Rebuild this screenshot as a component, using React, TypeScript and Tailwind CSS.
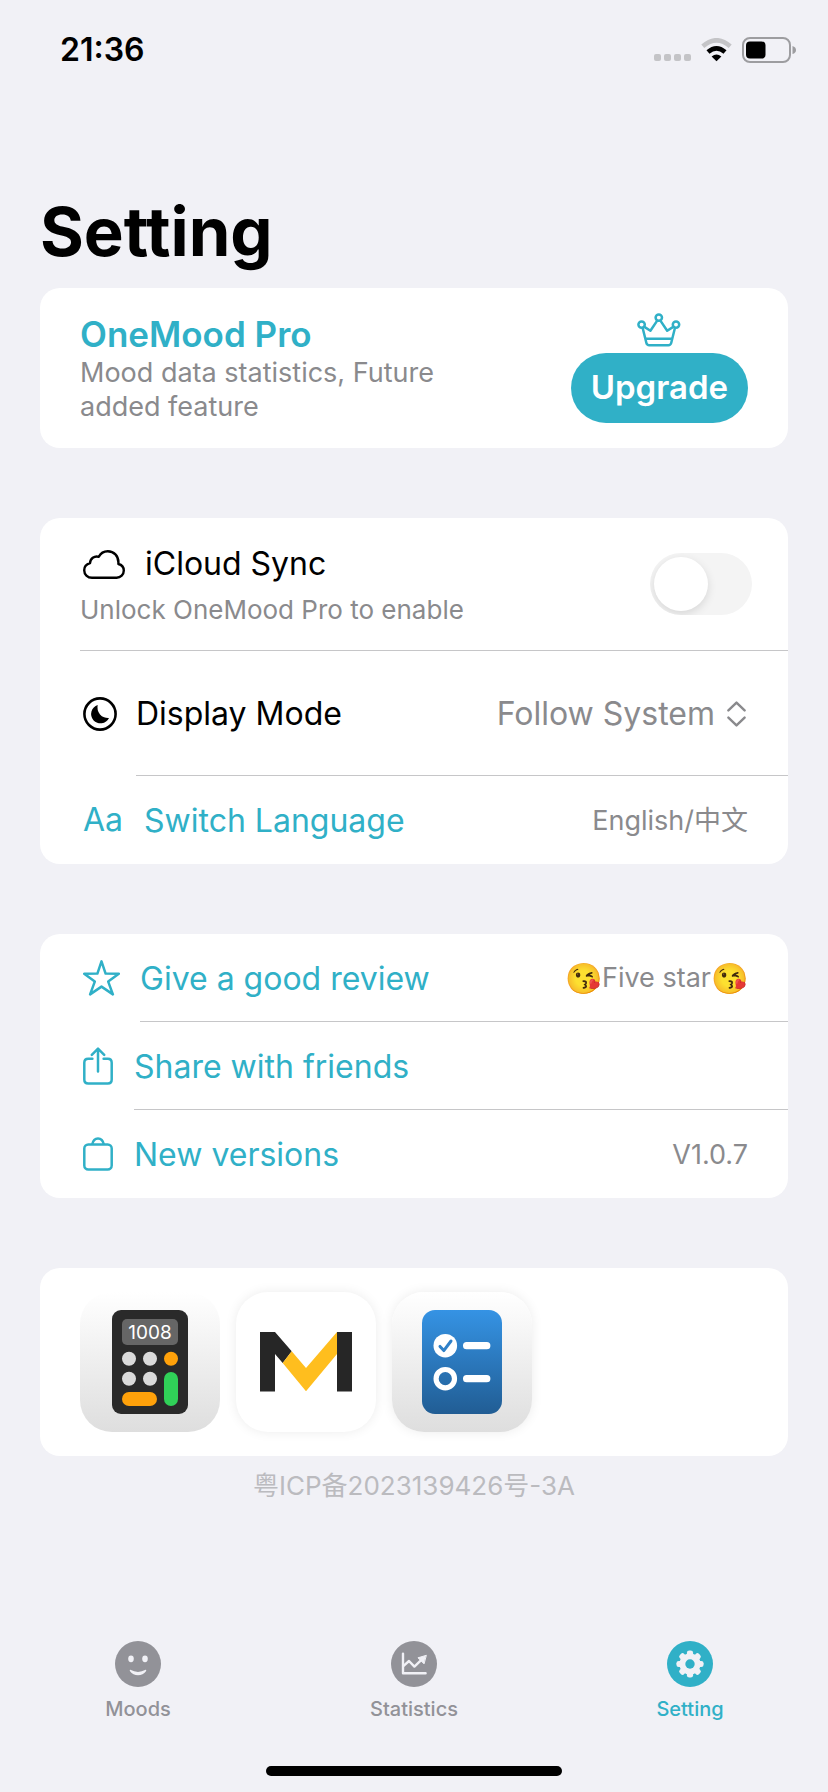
import { useState, type ReactNode } from 'react'
import clsx from 'clsx'

function StatusIcons() {
  return (
    <div className="flex items-center gap-2.5">
      <svg width="37" height="24" viewBox="0 0 37 24" fill="#c4c4c7">
        {[0, 10, 20, 30].map((x) => (
          <rect key={x} x={x} y="16" width="7" height="7" rx="2" />
        ))}
      </svg>
      <svg width="31" height="24" viewBox="0 0 31 24" fill="none" strokeWidth="4.6">
        <path d="M1.8 8.2Q15.5 -3.6 29.2 8.2" stroke="#c4c4c7" />
        <path d="M7 14Q15.5 6.6 24 14" stroke="#000" />
        <path d="M15.5 23.2L10.6 18.4Q15.5 14.4 20.4 18.4Z" fill="#000" />
      </svg>
      <svg width="54" height="26" viewBox="0 0 54 26">
        <rect x="1" y="1" width="47" height="24" rx="7" fill="none" stroke="#9d9da0" strokeWidth="2" />
        <rect x="4" y="4.5" width="19.5" height="17" rx="4" fill="#000" />
        <path d="M50.5 9Q54 10 54 13Q54 16 50.5 17Z" fill="#9d9da0" />
      </svg>
    </div>
  )
}

function CrownIcon() {
  return (
    <svg width="44" height="34" viewBox="0 0 44 34" fill="none" stroke="currentColor" strokeWidth="2.5" strokeLinejoin="round">
      <circle cx="4.6" cy="11.6" r="3.2" />
      <circle cx="21.8" cy="4.6" r="3.2" />
      <circle cx="39" cy="11.6" r="3.2" />
      <path d="M5.6 14.8L9.4 30Q10 32.2 12.2 32.2H31.4Q33.6 32.2 34.2 30L38 14.8" />
      <path d="M7 13.6L13.4 17.8L20.2 7.6M36.6 13.6L30.2 17.8L23.4 7.6" />
      <path d="M8.4 25.8H35.2" />
    </svg>
  )
}

function CloudIcon() {
  return (
    <svg width="42" height="29" viewBox="0 0 42 29" fill="none" stroke="currentColor" strokeWidth="2.4" strokeLinejoin="round">
      <path d="M9 27.8C4.5 27.8 1.2 24.4 1.2 20.3C1.2 17 3.4 14.2 7 13.2C7.2 8.6 11.3 5.6 15.8 6.8C17.6 3.3 21 1.2 24.8 1.2C31 1.2 35.4 6 35.4 12.2V14C38.6 14.8 40.8 17.3 40.8 20.6C40.8 24.6 37.6 27.8 33.6 27.8Z" />
    </svg>
  )
}

function MoonIcon() {
  return (
    <svg width="34" height="34" viewBox="0 0 34 34">
      <circle cx="17" cy="17" r="15.6" fill="none" stroke="currentColor" strokeWidth="2.6" />
      <path d="M14.7 8A9.4 9.4 0 1 0 26 21A10.6 10.6 0 0 1 14.7 8Z" fill="currentColor" />
    </svg>
  )
}

function StarIcon() {
  return (
    <svg width="37" height="36" viewBox="0 0 37 36" fill="none" stroke="currentColor" strokeWidth="2.5" strokeLinejoin="round">
      <path d="M18.5 1.4L22.6 13.6L35.8 13.8L25.2 21.6L29.9 34.4L18.5 26.6L7.1 34.4L11.8 21.6L1.2 13.8L14.4 13.6Z" />
    </svg>
  )
}

function ShareIcon() {
  return (
    <svg width="30" height="38" viewBox="0 0 30 38" fill="none" stroke="currentColor" strokeWidth="2.5" strokeLinecap="round" strokeLinejoin="round">
      <path d="M9.4 11.8H5.2Q1.3 11.8 1.3 15.8V32.6Q1.3 36.6 5.2 36.6H24.8Q28.7 36.6 28.7 32.6V15.8Q28.7 11.8 24.8 11.8H20.6" />
      <path d="M15 1.8V24.4M8.8 7.8L15 1.6L21.2 7.8" />
    </svg>
  )
}

function BagIcon() {
  return (
    <svg width="30" height="34" viewBox="0 0 30 34" fill="none" stroke="currentColor" strokeWidth="2.5">
      <rect x="1.3" y="7.4" width="27.4" height="25.2" rx="4" />
      <path d="M9.2 7.4Q10.4 1.4 15 1.4Q19.6 1.4 20.8 7.4" />
    </svg>
  )
}

function CalculatorApp() {
  return (
    <svg className="size-full" viewBox="0 0 140 140">
      <rect x="32" y="18" width="76" height="104" rx="9" fill="#2a2a2a" />
      <rect x="42" y="27" width="56" height="26" rx="5" fill="#666" />
      <text x="70" y="47" textAnchor="middle" fontSize="19" fill="#fff">
        1008
      </text>
      <g fill="#dadada">
        <circle cx="49" cy="66.7" r="7" />
        <circle cx="70" cy="66.7" r="7" />
        <circle cx="49" cy="86.7" r="7" />
        <circle cx="70" cy="86.7" r="7" />
      </g>
      <circle cx="91" cy="66.7" r="7" fill="#ffa10a" />
      <rect x="42" y="100" width="35" height="14" rx="7" fill="#ffa10a" />
      <rect x="84" y="80" width="14" height="34" rx="7" fill="#30d158" />
    </svg>
  )
}

function MailApp() {
  return (
    <svg className="size-full" viewBox="0 0 140 140">
      <path d="M24 40H39L55.7 59.3L46.7 71L39 62V99.6H24ZM101 40H116V99.6H101Z" fill="#262626" />
      <path d="M55.7 59.3L70 76L101 40V62L70 99.2L46.7 71Z" fill="#ffbe1e" />
    </svg>
  )
}

function TodoApp() {
  return (
    <svg className="size-full" viewBox="0 0 140 140">
      <defs>
        <linearGradient id="todo" x1="0" y1="0" x2="0" y2="1">
          <stop offset="0" stopColor="#3593e4" />
          <stop offset="1" stopColor="#215d94" />
        </linearGradient>
      </defs>
      <rect x="30" y="18" width="80" height="104" rx="13" fill="url(#todo)" />
      <circle cx="53.3" cy="53.7" r="11.8" fill="#fff" />
      <path d="M48 54.4L51.8 58.6L59 49" fill="none" stroke="#2f80c8" strokeWidth="3" strokeLinecap="round" strokeLinejoin="round" />
      <circle cx="53.3" cy="86.7" r="9.2" fill="none" stroke="#fff" strokeWidth="5.2" />
      <path d="M74.6 53.7H94.8M74.6 86.7H94.8" stroke="#fff" strokeWidth="7.2" strokeLinecap="round" />
    </svg>
  )
}

function MoodsIcon() {
  return (
    <svg width="46" height="46" viewBox="0 0 46 46">
      <circle cx="23" cy="23" r="23" fill="currentColor" />
      <ellipse cx="16" cy="17.8" rx="2.8" ry="3.4" fill="#f1f1f6" />
      <ellipse cx="30" cy="17.8" rx="2.8" ry="3.4" fill="#f1f1f6" />
      <path d="M15.4 28.8Q23 33 30.6 28.8Q31.8 28.8 31 30.2Q28 34.2 23 34.2Q18 34.2 15 30.2Q14.2 28.8 15.4 28.8Z" fill="#f1f1f6" />
    </svg>
  )
}

function StatisticsIcon() {
  return (
    <svg width="46" height="46" viewBox="0 0 46 46" fill="none" stroke="#f1f1f6" strokeWidth="2.4" strokeLinecap="round" strokeLinejoin="round">
      <circle cx="23" cy="23" r="23" fill="currentColor" stroke="none" />
      <path d="M12 12.6V32.3H34.6" />
      <path d="M12.6 24.8L18 20L23.4 25.6L30.4 18.8" />
      <path d="M35 14.4L27 16.8L32.8 22.6Z" fill="#f1f1f6" strokeWidth="1" />
    </svg>
  )
}

function GearIcon() {
  return (
    <svg width="46" height="46" viewBox="0 0 46 46">
      <circle cx="23" cy="23" r="23" fill="currentColor" />
      <g fill="#f1f1f6">
        <circle cx="23" cy="23" r="10.6" />
        {[0, 45, 90, 135].map((deg) => (
          <rect key={deg} x="19.9" y="9.4" width="6.2" height="27.2" rx="2.4" transform={`rotate(${deg} 23 23)`} />
        ))}
      </g>
      <circle cx="23" cy="23" r="4.7" fill="currentColor" />
    </svg>
  )
}

function Card({ children }: { children: ReactNode }) {
  return <section className="overflow-hidden rounded-[20px] bg-white">{children}</section>
}

type ActionRowProps = {
  icon: ReactNode
  // each glyph has its own width, so the divider starts where the label does
  iconClass: string
  label: string
  value?: ReactNode
  last?: boolean
}

function ActionRow({ icon, iconClass, label, value, last }: ActionRowProps) {
  return (
    <button type="button" className="flex h-22 w-full items-center pl-10 text-left">
      <span className={clsx('flex shrink-0 items-center pl-[3px] text-[#30b0c7]', iconClass)}>{icon}</span>
      <span className={clsx('flex h-full flex-1 items-center justify-between pt-0.5 pr-10', !last && 'border-b border-[#c6c6c8]')}>
        <span className="text-[32px] text-[#30b0c7]">{label}</span>
        {value && <span className="flex items-center text-[27px] text-[#8a8a8d]">{value}</span>}
      </span>
    </button>
  )
}

const apps = [
  { name: 'Calculator', art: <CalculatorApp />, className: 'bg-linear-to-b from-white to-[#dedede]' },
  { name: 'Mail', art: <MailApp />, className: 'bg-white shadow-[0_0_12px_rgba(0,0,0,0.08)]' },
  { name: 'Todo', art: <TodoApp />, className: 'bg-linear-to-b from-white to-[#dedede] shadow-[0_0_12px_rgba(0,0,0,0.08)]' },
]

const tabs = [
  { id: 'moods', label: 'Moods', icon: <MoodsIcon /> },
  { id: 'statistics', label: 'Statistics', icon: <StatisticsIcon /> },
  { id: 'setting', label: 'Setting', icon: <GearIcon /> },
]

export default function App() {
  const [sync, setSync] = useState(false)
  const [mode, setMode] = useState('system')

  return (
    <div className="flex min-h-screen flex-col bg-[#f1f1f6] font-[Inter,'Noto_Sans_CJK_SC',sans-serif] text-black">
      <header className="flex h-[100px] items-center justify-between pr-8 pl-[60px]">
        <span className="text-[32px] font-semibold">21:36</span>
        <StatusIcons />
      </header>

      <main className="px-10">
        <h1 className="mt-[92px] mb-4 text-[67px] leading-20 font-bold">Setting</h1>

        <div className="flex flex-col gap-[70px]">
          <Card>
            <div className="flex items-center justify-between px-10 py-6">
              <div className="max-w-[400px]">
                <h2 className="text-[35px] leading-11 font-semibold text-[#30b0c7]">OneMood Pro</h2>
                <p className="text-[27px] leading-[34px] text-[#8a8a8d]">Mood data statistics, Future added feature</p>
              </div>
              <div className="flex flex-col items-center gap-1.5 text-[#30b0c7]">
                <CrownIcon />
                <button type="button" className="h-[70px] rounded-full bg-[#30b0c7] px-5 text-[33px] font-semibold text-white">
                  Upgrade
                </button>
              </div>
            </div>
          </Card>

          <Card>
            <div className="pl-10">
              <div className="flex h-[133px] items-center justify-between border-b border-[#c6c6c8] pr-9">
                <div>
                  <label htmlFor="sync" className="flex items-center gap-5 pl-[3px] text-[32px] leading-11">
                    <CloudIcon />
                    iCloud Sync
                  </label>
                  <p className="mt-2 text-[26px] leading-8 text-[#8a8a8d]">Unlock OneMood Pro to enable</p>
                </div>
                <input
                  id="sync"
                  type="checkbox"
                  role="switch"
                  checked={sync}
                  onChange={(e) => setSync(e.target.checked)}
                  className="flex h-[62px] w-[102px] appearance-none items-center overflow-hidden rounded-full bg-[#f4f4f4] p-1 before:size-[54px] before:rounded-full before:bg-white before:shadow-[0_3px_10px_rgba(0,0,0,0.12)] checked:justify-end checked:bg-[#30b0c7]"
                />
              </div>
            </div>

            <div className="flex h-[125px] items-center pl-10">
              <span className="w-14 shrink-0 pl-[3px]">
                <MoonIcon />
              </span>
              <div className="flex h-full flex-1 items-center justify-between border-b border-[#c6c6c8] pt-0.5 pr-[42px] text-[32px]">
                <label htmlFor="mode">Display Mode</label>
                <span className="flex items-center gap-3 text-[#8a8a8d]">
                  <select id="mode" value={mode} onChange={(e) => setMode(e.target.value)} className="appearance-none bg-transparent text-right">
                    <option value="system">Follow System</option>
                    <option value="light">Light</option>
                    <option value="dark">Dark</option>
                  </select>
                  <svg width="19" height="26" viewBox="0 0 19 26" fill="none" stroke="currentColor" strokeWidth="2.4" strokeLinecap="round" strokeLinejoin="round">
                    <path d="M1.4 9.4L9.5 1.6L17.6 9.4M1.4 16.6L9.5 24.4L17.6 16.6" />
                  </svg>
                </span>
              </div>
            </div>

            <ActionRow icon={<span className="text-[32px]">Aa</span>} iconClass="w-16" label="Switch Language" value="English/中文" last />
          </Card>

          <Card>
            <ActionRow
              icon={<StarIcon />}
              iconClass="w-[60px]"
              label="Give a good review"
              value={
                <>
                  <span className="text-[30px]">😘</span>
                  Five star
                  <span className="text-[30px]">😘</span>
                </>
              }
            />
            <ActionRow icon={<ShareIcon />} iconClass="w-[54px]" label="Share with friends" />
            <ActionRow icon={<BagIcon />} iconClass="w-[54px]" label="New versions" value="V1.0.7" last />
          </Card>

          <Card>
            <div className="flex gap-4 px-10 py-6">
              {apps.map((app) => (
                <a key={app.name} href="#" aria-label={app.name} className={clsx('size-[140px] rounded-[32px]', app.className)}>
                  {app.art}
                </a>
              ))}
            </div>
          </Card>
        </div>

        <p className="mt-3 text-center text-[26px] leading-9 text-[#bbbbbf]">粤ICP备2023139426号-3A</p>
      </main>

      <footer className="mt-auto pb-4">
        <nav className="grid grid-cols-3">
          {tabs.map((tab) => (
            <a
              key={tab.id}
              href={`#${tab.id}`}
              className={clsx(
                'flex flex-col items-center gap-2.5 text-[20px] leading-6 font-medium',
                tab.id === 'setting' ? 'text-[#30b0c7]' : 'text-[#929298]'
              )}
            >
              {tab.icon}
              {tab.label}
            </a>
          ))}
        </nav>
        <div className="mx-auto mt-[45px] h-2.5 w-[296px] rounded-full bg-black" />
      </footer>
    </div>
  )
}
